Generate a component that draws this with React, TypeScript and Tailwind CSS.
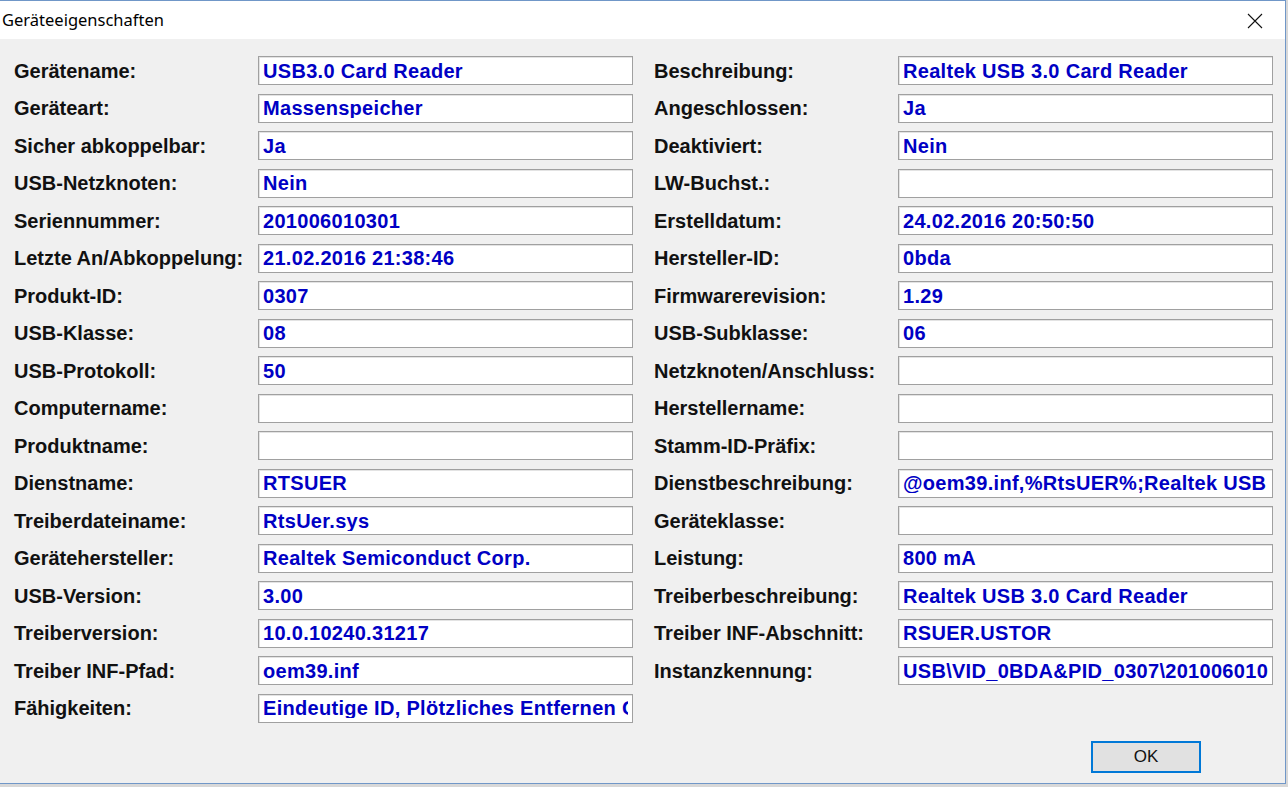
import React from 'react';

type Field = { label: string; value?: string };

const left: Field[] = [
  { label: 'Gerätename:', value: 'USB3.0 Card Reader' },
  { label: 'Geräteart:', value: 'Massenspeicher' },
  { label: 'Sicher abkoppelbar:', value: 'Ja' },
  { label: 'USB-Netzknoten:', value: 'Nein' },
  { label: 'Seriennummer:', value: '201006010301' },
  { label: 'Letzte An/Abkoppelung:', value: '21.02.2016 21:38:46' },
  { label: 'Produkt-ID:', value: '0307' },
  { label: 'USB-Klasse:', value: '08' },
  { label: 'USB-Protokoll:', value: '50' },
  { label: 'Computername:' },
  { label: 'Produktname:' },
  { label: 'Dienstname:', value: 'RTSUER' },
  { label: 'Treiberdateiname:', value: 'RtsUer.sys' },
  { label: 'Gerätehersteller:', value: 'Realtek Semiconduct Corp.' },
  { label: 'USB-Version:', value: '3.00' },
  { label: 'Treiberversion:', value: '10.0.10240.31217' },
  { label: 'Treiber INF-Pfad:', value: 'oem39.inf' },
  { label: 'Fähigkeiten:', value: 'Eindeutige ID, Plötzliches Entfernen OK' },
];

const right: Field[] = [
  { label: 'Beschreibung:', value: 'Realtek USB 3.0 Card Reader' },
  { label: 'Angeschlossen:', value: 'Ja' },
  { label: 'Deaktiviert:', value: 'Nein' },
  { label: 'LW-Buchst.:' },
  { label: 'Erstelldatum:', value: '24.02.2016 20:50:50' },
  { label: 'Hersteller-ID:', value: '0bda' },
  { label: 'Firmwarerevision:', value: '1.29' },
  { label: 'USB-Subklasse:', value: '06' },
  { label: 'Netzknoten/Anschluss:' },
  { label: 'Herstellername:' },
  { label: 'Stamm-ID-Präfix:' },
  { label: 'Dienstbeschreibung:', value: '@oem39.inf,%RtsUER%;Realtek USB 3.0 Card Reader' },
  { label: 'Geräteklasse:' },
  { label: 'Leistung:', value: '800 mA' },
  { label: 'Treiberbeschreibung:', value: 'Realtek USB 3.0 Card Reader' },
  { label: 'Treiber INF-Abschnitt:', value: 'RSUER.USTOR' },
  { label: 'Instanzkennung:', value: 'USB\\VID_0BDA&PID_0307\\201006010301' },
];

function Row({ label, value }: Field) {
  return (
    <div className="flex items-center h-[29px]">
      <div className="w-[244px] text-[20px] font-bold text-[#111] leading-none whitespace-nowrap">{label}</div>
      <div className="w-[375px] h-[29px] bg-white border border-[#a0a0a0] shadow-[inset_1px_1px_0_#e3e3e3] flex items-center pl-[4px] pr-[4px]">
        <div className="flex-1 flex items-center overflow-hidden leading-none">
          <span className="text-[20px] font-bold text-[#0000c4] tracking-[0.3px] leading-none whitespace-nowrap">
            {value ?? ''}
          </span>
        </div>
      </div>
    </div>
  );
}

export default function App() {
  return (
    <div className="w-[1288px] h-[787px] bg-[#d8d8d8] overflow-hidden" style={{ fontFamily: '"Liberation Sans", Arial, sans-serif' }}>
      <div className="w-[1286px] h-[784px] flex flex-col border-t border-r border-b border-[#7097c8] bg-[#f0f0f0]">
        <div className="h-[38px] bg-white flex items-center justify-between pl-[2px] pr-[22px] shrink-0">
          <span className="text-[16.5px] text-black" style={{ fontFamily: '"Noto Sans", "Open Sans", sans-serif' }}>Geräteeigenschaften</span>
          <svg width="16" height="16" viewBox="0 0 16 16" className="mt-[2px]">
            <path d="M1 1L15 15M15 1L1 15" stroke="#111" strokeWidth="1.1" fill="none" />
          </svg>
        </div>

        <div className="flex pl-[14px] pt-[17px] gap-x-[21px]">
          <div className="flex flex-col gap-y-[8.5px]">
            {left.map((f) => (
              <Row key={f.label} {...f} />
            ))}
          </div>
          <div className="flex flex-col gap-y-[8.5px]">
            {right.map((f) => (
              <Row key={f.label} {...f} />
            ))}
          </div>
        </div>

        <div className="flex justify-end pr-[84px] mt-[18px]">
          <button className="w-[110px] h-[32px] bg-[#e1e1e1] border-2 border-[#0078d7] text-[17px] text-[#111] leading-none">
            OK
          </button>
        </div>
      </div>
    </div>
  );
}
